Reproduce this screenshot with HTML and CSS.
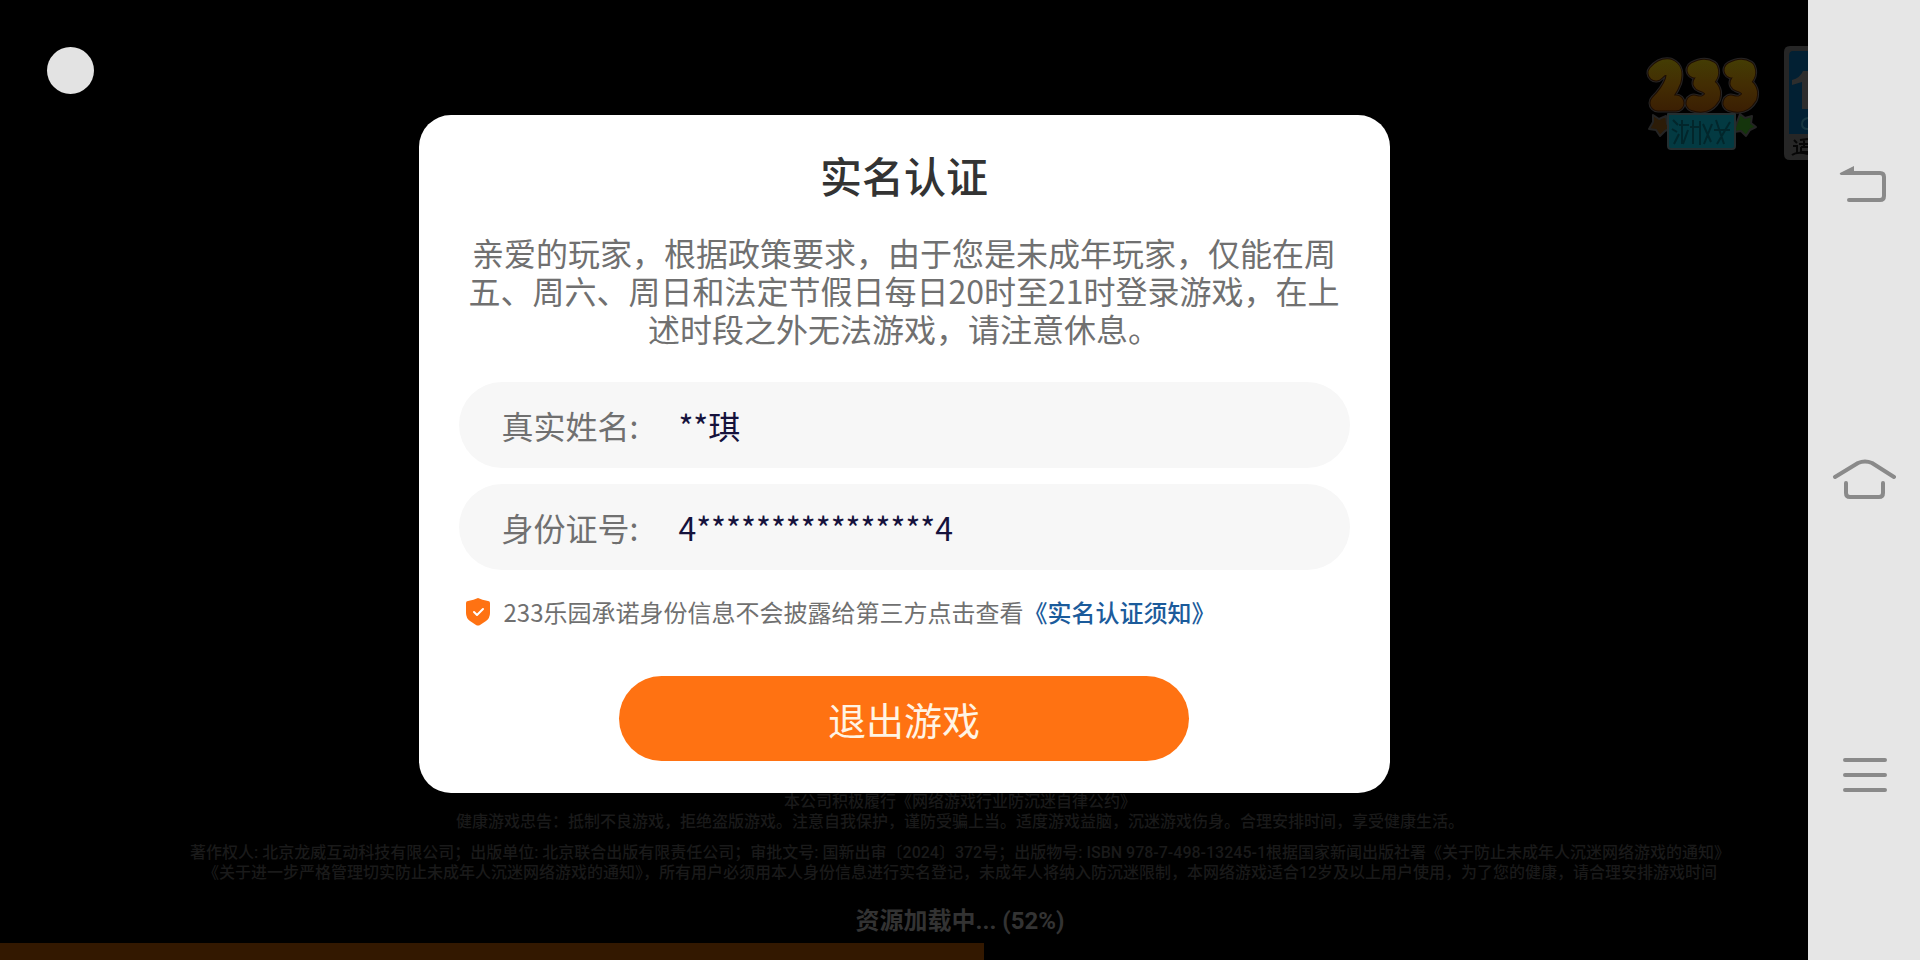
FILE: index.html
```html
<!DOCTYPE html>
<html lang="zh-CN">
<head>
<meta charset="utf-8">
<title>实名认证</title>
<link rel="stylesheet" href="styles.css">
</head>
<body>
<div class="screen">
  <main class="game">
    <div class="game-top">
      <button class="float-ball" type="button" aria-label="悬浮球"></button>
      <div class="badges">
        <svg class="logo" viewBox="0 0 120 100" role="img" aria-label="233 游戏">
          <defs>
            <linearGradient id="gold" gradientUnits="userSpaceOnUse" x1="0" y1="0" x2="0" y2="58">
              <stop offset="0" stop-color="#443f04"/>
              <stop offset="0.5" stop-color="#432d03"/>
              <stop offset="1" stop-color="#3a1d03"/>
            </linearGradient>
            <path id="two" d="M12 17Q18 10 25 11Q32 14 29 25Q25 36 14 47H32"/>
            <path id="three" d="M51 14Q60 9 66 13Q69 21 57 27Q71 31 68 41Q62 51 50 47"/>
          </defs>
          <g stroke="#242424" stroke-width="2" stroke-linejoin="round">
            <path fill="#2c1c08" d="M9 59l6 4 7-3 1 8 4 4-6 3-5 5-4-6-7-1 4-7z"/>
            <path fill="#15350c" d="M96 58l5 4 7-2-1 7 5 4-6 3-4 6-5-5-7 1 2-7z"/>
          </g>
          <g fill="none" stroke="#262424" stroke-width="19" stroke-linecap="round" stroke-linejoin="round">
            <use href="#two"/>
            <use href="#three"/>
            <use href="#three" x="37"/>
          </g>
          <path fill="#033a42" stroke="#242e30" stroke-width="2" stroke-linejoin="round" d="M24 58h67v32q0 3-3 3H27q-3 0-3-3z"/>
          <g fill="none" stroke="#1e0e02" stroke-width="17" stroke-linecap="round" stroke-linejoin="round">
            <use href="#two"/>
            <use href="#three"/>
            <use href="#three" x="37"/>
          </g>
          <g fill="none" stroke="url(#gold)" stroke-width="15" stroke-linecap="round" stroke-linejoin="round">
            <use href="#two"/>
            <use href="#three"/>
            <use href="#three" x="37"/>
          </g>
          <g fill="none" stroke="#02262b" stroke-width="2">
            <path d="M29 64l5 5M28 73l5 3M30 88l5-10M38 64v24M35 69h10M44 74l-5 14M49 64v24M46 71h11M56 65v24M59 68l8 18M68 68l-8 20M72 64l8 24M86 66L73 88M70 74h16"/>
          </g>
        </svg>
        <svg class="age" viewBox="0 0 24 114" role="img" aria-label="适龄提示">
          <path fill="#262626" d="M24 0H6Q0 0 0 6v102q0 6 6 6h18z"/>
          <path fill="#022033" d="M24 5H9Q5 5 5 10v78h19z"/>
          <path fill="#2d2d2d" d="M8 34q8-2 11-9h5v38h-6V36l-10 3z"/>
          <path fill="none" stroke="#163540" stroke-width="2" d="M24 72q-6 1-6 6t6 5"/>
          <path fill="none" stroke="#060606" stroke-width="2" d="M10 94l3 3M9 100h4v7M8 109q5-4 16-1M16 94l8-1M15 98h9M20 94v6M17 101v5h7M17 101h7"/>
        </svg>
      </div>
    </div>
    <footer class="game-foot">
      <div class="notice">
        <p>本公司积极履行《网络游戏行业防沉迷自律公约》</p>
        <p>健康游戏忠告：抵制不良游戏，拒绝盗版游戏。注意自我保护，谨防受骗上当。适度游戏益脑，沉迷游戏伤身。合理安排时间，享受健康生活。</p>
      </div>
      <div class="notice">
        <p>著作权人: 北京龙威互动科技有限公司；出版单位: 北京联合出版有限责任公司；审批文号: 国新出审〔2024〕372号；出版物号: ISBN 978-7-498-13245-1根据国家新闻出版社署《关于防止未成年人沉迷网络游戏的通知》</p>
        <p>《关于进一步严格管理切实防止未成年人沉迷网络游戏的通知》，所有用户必须用本人身份信息进行实名登记，未成年人将纳入防沉迷限制，本网络游戏适合12岁及以上用户使用，为了您的健康，请合理安排游戏时间</p>
      </div>
      <p class="loading">资源加载中... (52%)</p>
      <div class="progress"><div class="progress-fill"></div></div>
    </footer>
    <div class="overlay">
      <section class="dialog" role="dialog" aria-labelledby="dialog-title">
        <h1 class="title" id="dialog-title">实名认证</h1>
        <p class="message">亲爱的玩家，根据政策要求，由于您是未成年玩家，仅能在周五、周六、周日和法定节假日每日20时至21时登录游戏，在上述时段之外无法游戏，请注意休息。</p>
        <div class="fields">
          <div class="field">
            <label for="real-name">真实姓名:</label>
            <input id="real-name" type="text" value="**琪" readonly>
          </div>
          <div class="field">
            <label for="id-number">身份证号:</label>
            <input id="id-number" type="text" value="4****************4" readonly>
          </div>
        </div>
        <div class="promise">
          <svg class="shield" viewBox="0 0 24 28" aria-hidden="true">
            <path fill="#ff7212" d="M2 3Q8 2 12 0Q16 2 22 3Q24 3 24 5V15q0 5-4 8l-6 4q-2 1-4 0l-6-4q-4-3-4-8V5Q0 3 2 3z"/>
            <path fill="none" stroke="#fff" stroke-width="2" stroke-linecap="round" stroke-linejoin="round" d="M8 14l3 3 6-6"/>
          </svg>
          <p>233乐园承诺身份信息不会披露给第三方点击查看<a href="#notice">《实名认证须知》</a></p>
        </div>
        <button class="exit" type="button">退出游戏</button>
      </section>
    </div>
  </main>
  <nav class="navbar" aria-label="系统导航">
    <button type="button" aria-label="返回">
      <svg viewBox="0 0 64 44"><path fill="none" stroke="#8a8a8a" stroke-width="4" stroke-linecap="round" stroke-linejoin="round" d="M20 10H48Q52 10 52 14V33Q52 37 48 37H17"/><path fill="#8a8a8a" d="M8 10L22 3v9H9q-2-1-1-2z"/></svg>
    </button>
    <button type="button" aria-label="主页">
      <svg viewBox="0 0 64 44"><path fill="none" stroke="#8a8a8a" stroke-width="4" stroke-linecap="round" stroke-linejoin="round" d="M3 19L26 5Q33 2 40 5L62 19M14 25V35Q14 39 18 39H47Q51 39 51 35V25"/></svg>
    </button>
    <button type="button" aria-label="菜单">
      <svg viewBox="0 0 64 44"><path fill="none" stroke="#8a8a8a" stroke-width="4" stroke-linecap="round" d="M13 7H53M13 22H53M13 37H53"/></svg>
    </button>
  </nav>
</div>
</body>
</html>
```
FILE: styles.css
```css
* {
  box-sizing: border-box;
}

body {
  margin: 0;
  background: #000;
  font-family: "Noto Sans CJK SC", sans-serif;
}

p,
h1 {
  margin: 0;
}

button {
  padding: 0;
  border: 0;
  background: none;
  font: inherit;
}

.screen {
  display: flex;
  min-height: 100vh;
}

.game {
  position: relative;
  display: flex;
  flex: 1;
  flex-direction: column;
  justify-content: space-between;
  min-width: 0;
  overflow: hidden;
}

.game-top {
  display: flex;
  justify-content: space-between;
  padding: 46px 0 0 47px;
}

.float-ball {
  width: 47px;
  height: 47px;
  margin-top: 1px;
  border-radius: 50%;
  background: #e3e3e3;
}

.badges {
  display: flex;
  gap: 20px;
}

.logo {
  width: 120px;
  height: 100px;
  margin-top: 10px;
}

.age {
  width: 24px;
  height: 114px;
}

.game-foot {
  text-align: center;
  color: #1a1a1a;
}

.notice {
  margin-bottom: 11px;
  padding-left: 112px;
  font: 500 16px/20px Roboto, "Noto Sans CJK SC", sans-serif;
  white-space: nowrap;
}

.loading {
  margin: 24px 0 8px;
  padding-left: 112px;
  color: #333;
  font: 700 24px/28px Roboto, "Noto Sans CJK SC", sans-serif;
}

.progress {
  height: 17px;
}

.progress-fill {
  width: 54.4%;
  height: 100%;
  background: #331800;
}

.overlay {
  position: absolute;
  inset: 0;
  display: flex;
  align-items: center;
  justify-content: center;
  padding-bottom: 52px;
}

.dialog {
  display: flex;
  flex-direction: column;
  align-items: center;
  width: 971px;
  max-width: 100%;
  padding: 30px 40px 32px;
  border-radius: 32px;
  background: #fff;
}

.title {
  color: #333;
  font-size: 42px;
  font-weight: 500;
  line-height: 60px;
}

.message {
  margin-top: 28px;
  color: #707070;
  font-size: 32px;
  line-height: 38px;
  text-align: center;
}

.fields {
  display: grid;
  gap: 16px;
  align-self: stretch;
  margin-top: 35px;
}

.field {
  display: flex;
  align-items: center;
  gap: 40px;
  height: 86px;
  padding: 0 43px;
  border-radius: 43px;
  background: #f7f7f7;
  color: #707070;
  font-size: 32px;
}

.field input {
  flex: 1;
  min-width: 0;
  padding: 0;
  border: 0;
  outline: 0;
  background: none;
  color: #15123c;
  font: inherit;
}

.promise {
  display: flex;
  align-items: center;
  align-self: stretch;
  gap: 14px;
  margin-top: 24px;
  padding-left: 7px;
  color: #707070;
  font-size: 24px;
  line-height: 36px;
}

.shield {
  width: 24px;
  height: 28px;
}

.promise a {
  color: #1b5b9b;
  font-weight: 500;
  text-decoration: none;
}

.exit {
  width: 570px;
  max-width: 100%;
  height: 85px;
  margin-top: 46px;
  border-radius: 43px;
  background: #ff7212;
  color: #fff4e4;
  font-size: 38px;
}

.navbar {
  display: flex;
  flex-direction: column;
  align-items: center;
  justify-content: space-between;
  width: 112px;
  padding: 17vh 0;
  background: #e6e6e6;
}

.navbar svg {
  display: block;
  width: 64px;
  height: 44px;
}
```
